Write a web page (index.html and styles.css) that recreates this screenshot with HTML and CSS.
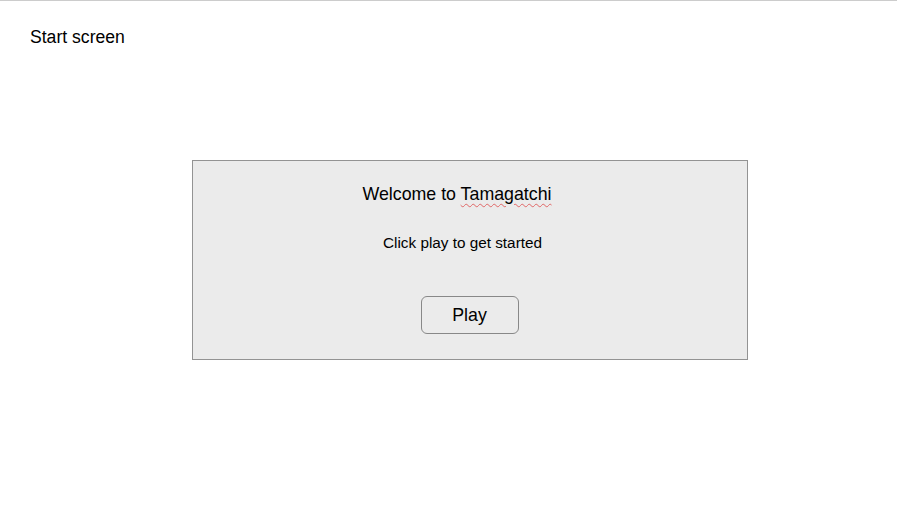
FILE: index.html
```html
<!DOCTYPE html>
<html>
<head>
<meta charset="utf-8">
<link rel="stylesheet" href="styles.css">
</head>
<body>
<div class="page">
  <div class="label">Start screen</div>
  <div class="card">
    <div class="title">Welcome to <span class="spell">Tamagatchi</span></div>
    <div class="subtitle">Click play to get started</div>
    <div class="actions"><button class="play">Play</button></div>
  </div>
</div>
</body>
</html>
```
FILE: styles.css
```css
html, body {
  margin: 0;
  padding: 0;
  background: #ffffff;
}
body {
  font-family: "Liberation Sans", Arial, sans-serif;
  color: #000;
}
.page {
  border-top: 1px solid #cccccc;
  height: 511px;
}
.label {
  font-size: 17.6px;
  line-height: 20px;
  margin: 26px 0 0 30px;
}
.card {
  margin: 113px 0 0 192px;
  width: 554px;
  height: 176px;
  border: 1px solid #939393;
  background: #ebebeb;
  display: flex;
  flex-direction: column;
  align-items: center;
  padding-top: 22px;
  box-sizing: content-box;
}
.title {
  font-size: 17.8px;
  line-height: 20px;
  margin-top: 1px;
  margin-right: 26px;
}
.spell {
  text-decoration: underline wavy #e06666;
  text-decoration-thickness: 1px;
  text-underline-offset: 3px;
}
.subtitle {
  font-size: 15.3px;
  line-height: 18px;
  margin-top: 30px;
  margin-right: 15px;
}
.actions {
  margin-top: 44px;
}
.play {
  width: 98px;
  height: 38px;
  border: 1px solid #888888;
  border-radius: 6px;
  background: #ebebeb;
  font-family: "Liberation Sans", Arial, sans-serif;
  font-size: 17.8px;
  line-height: 20px;
  color: #000;
  padding: 0;
  margin-left: -1px;
}
```
